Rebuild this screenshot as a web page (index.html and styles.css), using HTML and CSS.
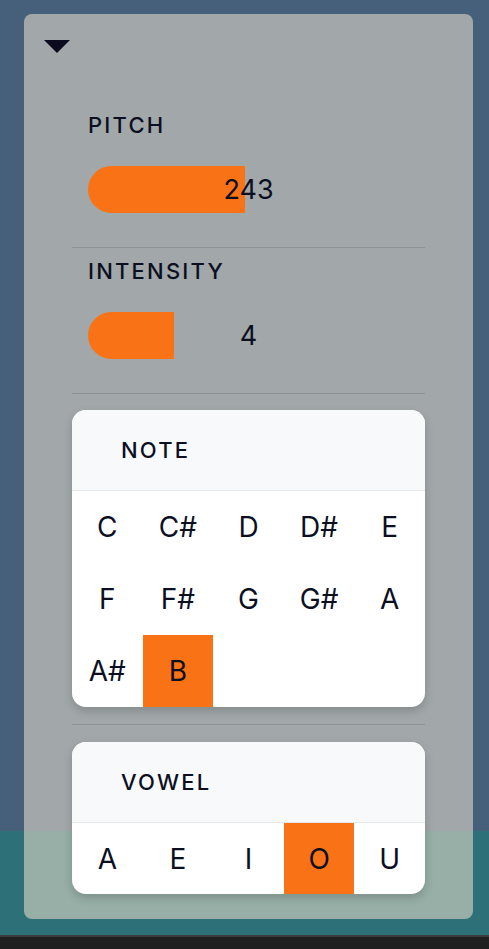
FILE: index.html
```html
<!DOCTYPE html>
<html lang="en">
<head>
<meta charset="utf-8">
<title>Voice panel</title>
<link rel="stylesheet" href="styles.css">
</head>
<body>
<div class="panel">
  <div class="toggle">
    <svg width="26" height="13" viewBox="0 0 26 13"><polygon points="0,0 26,0 13,13" fill="#0b0b1d"/></svg>
  </div>
  <div class="content">
    <section class="metric">
      <div class="label">PITCH</div>
      <div class="meter">
        <div class="fill" style="width:157px"></div>
        <div class="value">243</div>
      </div>
    </section>
    <section class="metric">
      <div class="label">INTENSITY</div>
      <div class="meter">
        <div class="fill" style="width:86px"></div>
        <div class="value">4</div>
      </div>
    </section>
    <section class="group">
      <div class="card">
        <div class="card-head">NOTE</div>
        <div class="grid">
          <div class="cell">C</div>
          <div class="cell">C#</div>
          <div class="cell">D</div>
          <div class="cell">D#</div>
          <div class="cell">E</div>
          <div class="cell">F</div>
          <div class="cell">F#</div>
          <div class="cell">G</div>
          <div class="cell">G#</div>
          <div class="cell">A</div>
          <div class="cell">A#</div>
          <div class="cell active">B</div>
        </div>
      </div>
    </section>
    <section class="group last">
      <div class="card">
        <div class="card-head">VOWEL</div>
        <div class="grid one-row">
          <div class="cell">A</div>
          <div class="cell">E</div>
          <div class="cell">I</div>
          <div class="cell active">O</div>
          <div class="cell">U</div>
        </div>
      </div>
    </section>
  </div>
</div>
</body>
</html>
```
FILE: styles.css
```css
html, body {
  margin: 0;
  padding: 0;
}
body {
  height: 949px;
  overflow: hidden;
  font-family: Inter, "Noto Sans", sans-serif;
  color: #0b0f1f;
  background: linear-gradient(to bottom,
    #465f7b 0, #465f7b 831px,
    #2e7077 831px, #2e7077 935px,
    #3c3c3c 935px, #3c3c3c 937px,
    #1f1f1f 937px, #1f1f1f 100%);
}
.panel {
  box-sizing: border-box;
  margin: 14px 0 0 24px;
  width: 449px;
  height: 905px;
  padding: 26px 20px 24px;
  border-radius: 8px;
  background: rgba(240, 230, 208, 0.54);
}
.toggle svg {
  display: block;
}
.toggle {
  height: 13px;
  margin-bottom: 49px;
}
.content {
  padding: 0 28px;
}
.metric {
  padding: 9px 16px 34px;
  border-bottom: 1px solid #8e9294;
}
.label {
  font-size: 22px;
  line-height: 28px;
  font-weight: 500;
  letter-spacing: 0.1em;
  margin-bottom: 27px;
}
.meter {
  display: grid;
  height: 47px;
  align-items: center;
}
.meter > * {
  grid-area: 1 / 1;
}
.fill {
  height: 47px;
  background: #f97316;
  border-radius: 24px 0 0 24px;
}
.value {
  text-align: center;
  font-size: 27px;
  line-height: 32px;
}
.group {
  padding: 16px 0 17px;
  border-bottom: 1px solid #8e9294;
}
.group.last {
  border-bottom: none;
  padding: 17px 0 0;
}
.card {
  background: #ffffff;
  border-radius: 14px;
  overflow: hidden;
  box-shadow: 0 4px 10px rgba(0, 0, 0, 0.18);
}
.card-head {
  height: 80px;
  display: flex;
  align-items: center;
  padding-left: 49px;
  background: #f8f9fb;
  border-bottom: 1px solid #e5e7eb;
  font-size: 22px;
  font-weight: 500;
  letter-spacing: 0.1em;
}
.grid {
  display: grid;
  grid-template-columns: repeat(5, 1fr);
  grid-auto-rows: 72px;
}
.grid.one-row {
  grid-auto-rows: 71px;
}
.cell {
  display: flex;
  align-items: center;
  justify-content: center;
  font-size: 28px;
}
.cell.active {
  background: #f97316;
}
```
